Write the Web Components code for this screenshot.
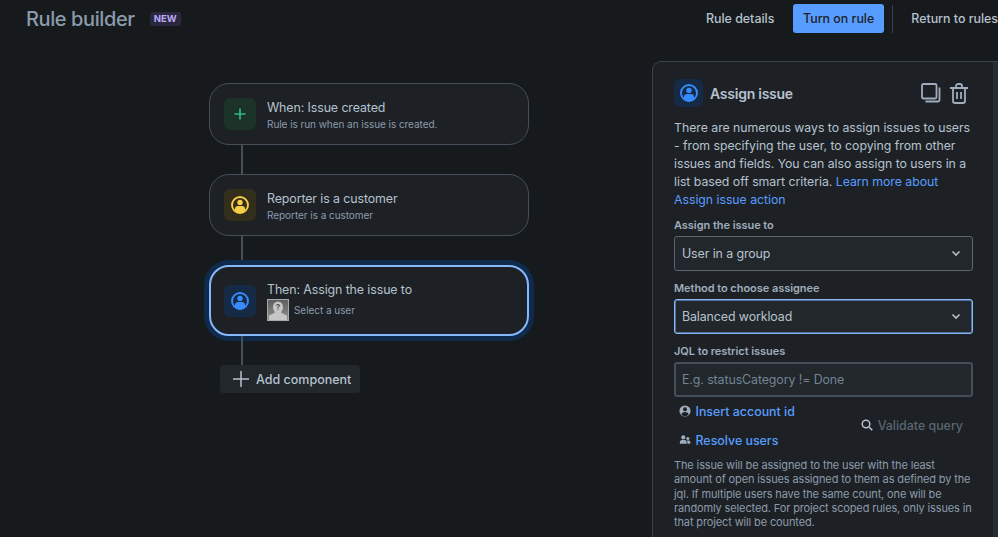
<!DOCTYPE html>
<html><head><meta charset="utf-8"><title>Rule builder</title>
<style>
html,body{margin:0;height:537px;overflow:hidden;background:#161A1D}
body{font-family:Inter,"Liberation Sans",sans-serif;color:#B6C2CF}
</style></head><body>
<rule-app></rule-app>
<template id="ico-user"><svg viewBox="0 0 20 20" width="20" height="20"><circle cx="10" cy="10" r="8" fill="none" stroke="currentColor" stroke-width="1.9"/><circle cx="10" cy="7.4" r="2.7" fill="currentColor"/><path d="M4.9 16v-1.8c0-2 1.4-3.2 3.2-3.2h3.8c1.8 0 3.2 1.2 3.2 3.2V16c-1.4 1.100-3.200 1.700-5.100 1.700S6.300 17.100 4.900 16z" fill="currentColor"/></svg></template>
<script>
const userIcon=()=>document.getElementById('ico-user').innerHTML;
class RuleBadge extends HTMLElement{constructor(){super();this.attachShadow({mode:'open'}).innerHTML=`<style>:host{display:inline-flex;align-items:center;height:14px;padding:0 4px;border-radius:3px;background:#2B273F;color:#B8ACF6;font:700 9.500px/14px Inter,sans-serif;letter-spacing:.1px}</style><slot></slot>`}}
customElements.define('rule-badge',RuleBadge);
class IconTile extends HTMLElement{constructor(){super();const c=this.getAttribute('color'),b=this.getAttribute('bg'),k=this.getAttribute('kind');
this.attachShadow({mode:'open'}).innerHTML=`<style>:host{display:flex;align-items:center;justify-content:center;flex:none;width:32px;height:32px;border-radius:6px;background:${b};color:${c}}</style>${k==='plus'?'<svg width="16" height="16" viewBox="0 0 16 16"><path d="M8 2.500v11M2.500 8h11" stroke="currentColor" stroke-width="1.700" fill="none"/></svg>':userIcon()}`}}
customElements.define('icon-tile',IconTile);
class RuleCard extends HTMLElement{constructor(){super();this.attachShadow({mode:'open'}).innerHTML=`<style>
:host{display:flex;box-sizing:border-box;align-items:center;gap:11px;width:320px;height:62px;padding:0 14px;border:1px solid #454F59;border-radius:20px;background:#1D2125}
:host([selected]){height:71px;border:2px solid #85B8FF;border-radius:20px;box-shadow:0 0 0 5px #0F2A4A;padding:0 13px}
.w{padding-top:2px}
.t{font-size:12.400px;line-height:16px;color:#B6C2CF;letter-spacing:-.1px}
.s{font-size:10px;line-height:14px;color:#8C9BAB;margin-top:1px;letter-spacing:-.05px}
</style><slot name="icon"></slot><div class="w"><div class="t"><slot name="title"></slot></div><div class="s"><slot name="sub"></slot></div></div>`}}
customElements.define('rule-card',RuleCard);
class RuleLine extends HTMLElement{constructor(){super();this.attachShadow({mode:'open'}).innerHTML=`<style>:host{display:block;width:2px;height:29px;margin-left:32px;background:#454F59}</style>`}}
customElements.define('rule-line',RuleLine);
class AddButton extends HTMLElement{constructor(){super();this.attachShadow({mode:'open'}).innerHTML=`<style>:host{display:flex;align-items:center;gap:7px;box-sizing:border-box;width:140px;height:28px;margin-left:11px;padding-left:13px;border-radius:3px;background:#22272B;color:#B6C2CF;font-size:12.500px;font-weight:500}</style><svg width="16" height="16" viewBox="0 0 16 16"><path d="M8 0v16M0 8h16" stroke="currentColor" stroke-width="1.500" fill="none"/></svg><slot></slot>`}}
customElements.define('add-button',AddButton);
class FieldBox extends HTMLElement{constructor(){super();const sel=this.hasAttribute('select');this.attachShadow({mode:'open'}).innerHTML=`<style>
:host{display:block}
.l{font-size:11px;font-weight:600;line-height:14px;color:#9FADBC;padding-bottom:4px;letter-spacing:-.05px}
.b{box-sizing:border-box;height:35px;display:flex;align-items:center;justify-content:space-between;padding:0 11px 0 7px;border:1px solid #596773;border-radius:3px;background:#22272B;font-size:12.400px;letter-spacing:-.1px;color:#B6C2CF}
:host([focused]) .b{border:1px solid #85B8FF;box-shadow:inset 0 0 0 .5px #85B8FF}
:host([placeholder]) .b{color:#738496;border-color:#454F59;border-width:2px;padding-left:6px}
svg{display:block}
</style><div class="l"><slot name="label"></slot></div><div class="b"><span><slot></slot></span>${sel?'<svg width="10" height="7" viewBox="0 0 10 7"><path d="M1.500 1.500 5 5l3.500-3.500" fill="none" stroke="#B6C2CF" stroke-width="1.600"/></svg>':''}</div>`}}
customElements.define('field-box',FieldBox);
class SidePanel extends HTMLElement{constructor(){super();this.attachShadow({mode:'open'}).innerHTML=`<style>
:host{display:flex;box-sizing:border-box;flex:none;width:346px;height:476px;border:1px solid #3B424A;border-right:0;border-bottom:0;border-top-left-radius:9px;background:#1D2125;overflow:hidden}
.c{flex:1;min-width:0;padding:17px 20px 0 21px}
.bar{flex:none;width:5px;background:#282C31}
header{display:flex;align-items:center;height:28px;gap:7px}
h2{margin:0;flex:1;font-size:14px;font-weight:600;color:#B6C2CF;letter-spacing:-.25px}
.act{display:flex;gap:8px;align-items:center;margin-right:4px;color:#9FADBC}
p{margin:12px 0 0;font-size:12.300px;line-height:18px;color:#B6C2CF;letter-spacing:-.03px}
a{color:#579DFF;text-decoration:none}
field-box{margin-top:10px}
.tools{position:relative;margin-top:4px;height:49px;font-size:12.400px;font-weight:500}
.row{display:flex;align-items:center;gap:4.500px;height:20px;padding-left:5px;color:#579DFF}
.row+.row{margin-top:9px}
.row svg{flex:none;width:12px;height:12px;color:#9FADBC}
.val{position:absolute;right:10px;top:14px;display:flex;align-items:center;gap:5px;color:#596773;height:20px}
.help{margin-top:8px;font-size:11px;line-height:14.300px;color:#8C9BAB;letter-spacing:-.13px}
</style><div class="c"><header><icon-tile color="#388BFF" bg="#152A45" style="width:29px;height:28px"></icon-tile><h2>Assign issue</h2><div class="act">
<svg width="20" height="20" viewBox="0 0 20 20" fill="none" stroke="currentColor" stroke-width="1.800"><rect x="1" y="1" width="14.500" height="14.500" rx="1.500"/><path d="M18.500 4.500v12.500a1.500 1.500 0 0 1-1.500 1.500H4.500"/></svg>
<svg width="20" height="21" viewBox="0 0 20 21" fill="none" stroke="currentColor" stroke-width="1.800"><path d="M1 5h18M4 5v13a2 2 0 0 0 2 2h8a2 2 0 0 0 2-2V5M7 5V3a2 2 0 0 1 2-2h2a2 2 0 0 1 2 2v2M8 9v7M12 9v7"/></svg></div></header>
<p>There are numerous ways to assign issues to users - from specifying the user, to copying from other issues and fields. You can also assign to users in a list based off smart criteria. <a>Learn more about Assign issue action</a></p>
<field-box select style="margin-top:9px"><span slot="label">Assign the issue to</span>User in a group</field-box>
<field-box select focused><span slot="label">Method to choose assignee</span>Balanced workload</field-box>
<field-box placeholder><span slot="label">JQL to restrict issues</span>E.g. statusCategory != Done</field-box>
<div class="tools"><div class="row"><svg viewBox="0 0 14 14"><circle cx="7" cy="7" r="6.500" fill="currentColor"/><circle cx="7" cy="5" r="2.300" fill="#1D2125"/><path d="M2.800 11c.6-2 2.200-2.900 4.200-2.900s3.600.9 4.200 2.900C10 12.200 8.600 12.800 7 12.800S4 12.200 2.800 11z" fill="#1D2125"/></svg><span>Insert account id</span></div>
<div class="row"><svg viewBox="0 0 14 14" fill="currentColor"><circle cx="5" cy="4" r="2.400"/><circle cx="10.300" cy="5.300" r="1.800"/><path d="M1 11.500V9.500C1 8 2.200 7 3.700 7h2.600C7.800 7 9 8 9 9.500v2zM9.800 11.500V9.300c0-.8-.3-1.400-.7-1.800h1.900c1.300 0 2.200.8 2.200 2v2z"/></svg><span>Resolve users</span></div>
<div class="val"><svg width="12" height="12" viewBox="0 0 12 12" fill="none" stroke="#B6C2CF" stroke-width="1.500"><circle cx="5" cy="5" r="3.800"/><path d="m8 8 3.300 3.300"/></svg><span>Validate query</span></div></div>
<div class="help">The issue will be assigned to the user with the least amount of open issues assigned to them as defined by the jql. If multiple users have the same count, one will be randomly selected. For project scoped rules, only issues in that project will be counted.</div>
</div><div class="bar"></div>`}}
customElements.define('side-panel',SidePanel);
class RuleApp extends HTMLElement{constructor(){super();this.attachShadow({mode:'open'}).innerHTML=`<style>
:host{display:block;height:537px;overflow:hidden}
.top{display:flex;align-items:center;height:37px;padding-left:26px}
h1{margin:0;font-size:20px;font-weight:500;color:#8C9BAB;letter-spacing:-.4px}
rule-badge{margin-left:15px}
.nav{margin-left:auto;display:flex;align-items:center;font-size:12.400px;font-weight:500;color:#B6C2CF;white-space:nowrap;width:292px;flex:none}
.nav .d{width:68px}
.on{box-sizing:border-box;width:92px;height:29px;margin-left:19px;display:flex;align-items:center;justify-content:center;background:#579DFF;color:#1D2125;border-radius:3px}
.sep{width:1px;height:28px;background:#38414A;margin:0 18px 0 8px}
main{display:flex;justify-content:space-between;padding-top:24px}
.flow{padding:22px 0 0 209px;display:flex;flex-direction:column}
rule-line{flex:none}
</style><div class="top"><h1>Rule builder</h1><rule-badge>NEW</rule-badge><div class="nav"><span class="d">Rule details</span><div class="on">Turn on rule</div><div class="sep"></div><span>Return to rules</span></div></div>
<main><div class="flow">
<rule-card><icon-tile slot="icon" kind="plus" color="#2ABB7F" bg="#1C3329"></icon-tile><span slot="title">When: Issue created</span><span slot="sub">Rule is run when an issue is created.</span></rule-card>
<rule-line></rule-line>
<rule-card><icon-tile slot="icon" color="#F5CD47" bg="#332E1B"></icon-tile><span slot="title">Reporter is a customer</span><span slot="sub">Reporter is a customer</span></rule-card>
<rule-line></rule-line>
<rule-card selected><icon-tile slot="icon" color="#388BFF" bg="#152A45"></icon-tile><span slot="title">Then: Assign the issue to</span><span slot="sub" style="display:flex;align-items:center;gap:5px"><svg width="22" height="22" viewBox="0 0 22 22"><defs><linearGradient id="g" x1="0" y1="0" x2="0" y2="1"><stop offset="0" stop-color="#5f5f5f"/><stop offset="1" stop-color="#8f8f8f"/></linearGradient></defs><rect width="22" height="22" fill="#a8a8a8"/><rect x="1" y="1" width="20" height="20" fill="url(#g)"/><path d="M6 8a5 5.500 0 0 1 10 0c0 2.500-1 4-2 5 0 1 3 2 6 3.500V21H2v-4.500c3-1.500 6-2.500 6-3.500-1-1-2-2.500-2-5z" fill="#c6c6c6"/><text x="11" y="11" font-size="8" font-weight="700" text-anchor="middle" fill="#555" font-family="Inter">?</text></svg>Select a user</span></rule-card>
<rule-line></rule-line>
<add-button>Add component</add-button>
</div><side-panel></side-panel></main>`}}
customElements.define('rule-app',RuleApp);
</script>
</body></html>
